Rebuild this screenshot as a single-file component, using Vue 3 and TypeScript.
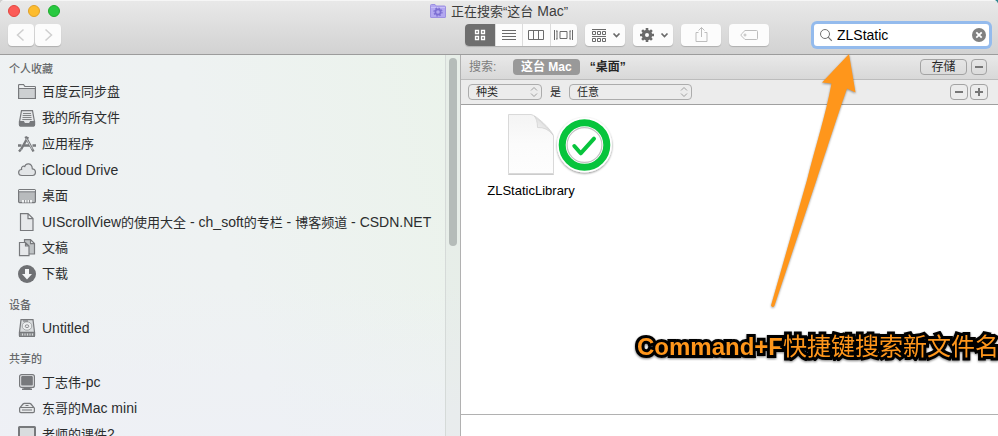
<script setup lang="ts">
import { ref } from 'vue'

interface Place {
  icon: string
  label: string
}
interface Section {
  title: string
  places: Place[]
}
interface Run {
  text: string
  latin: boolean
}

const sections: Section[] = [
  {
    title: '个人收藏',
    places: [
      { icon: 'folder', label: '百度云同步盘' },
      { icon: 'inbox', label: '我的所有文件' },
      { icon: 'apps', label: '应用程序' },
      { icon: 'cloud', label: 'iCloud Drive' },
      { icon: 'desktop', label: '桌面' },
      { icon: 'doc', label: 'UIScrollView的使用大全 - ch_soft的专栏 - 博客频道 - CSDN.NET' },
      { icon: 'docs', label: '文稿' },
      { icon: 'download', label: '下载' },
    ],
  },
  { title: '设备', places: [{ icon: 'disk', label: 'Untitled' }] },
  {
    title: '共享的',
    places: [
      { icon: 'pc', label: '丁志伟-pc' },
      { icon: 'mini', label: '东哥的Mac mini' },
      { icon: 'display', label: '老师的课件2' },
    ],
  },
]

// Latin runs are set one size larger than the Chinese characters beside them.
function runs(label: string): Run[] {
  return (label.match(/[\x20-\x7e]+|[^\x20-\x7e]+/g) ?? []).map((text) => ({
    text,
    latin: /^[\x20-\x7e]/.test(text),
  }))
}

const query = ref('ZLStatic')
const kind = ref('种类')
const value = ref('任意')
const view = ref(0)
const views = ['图标', '列表', '分栏', 'Cover Flow']
</script>

<template>
  <div class="window">
    <header class="chrome">
      <div class="titlebar">
        <div class="lights">
          <button class="light red" aria-label="关闭"></button>
          <button class="light yellow" aria-label="最小化"></button>
          <button class="light green" aria-label="缩放"></button>
        </div>
        <h1 class="title">
          <svg width="16" height="14" viewBox="0 0 16 14" aria-hidden="true">
            <path d="M0.5 13V1.5q0-1 1-1h3.5l1.2 1.5h8.3q1 0 1 1V13q0 .5-.5.5h-14q-.5 0-.5-.5z" fill="#b3a8f0" stroke="#9d90e2" />
            <path d="M1 3.500h14" stroke="#c9c1f8" />
            <circle cx="8" cy="8" r="2.600" fill="none" stroke="#7c6ed2" stroke-width="1.600" />
            <circle cx="8" cy="8" r="4" fill="none" stroke="#7c6ed2" stroke-width="1.200" stroke-dasharray="1.600 1.540" />
          </svg>
          <span class="label"><span
            v-for="(run, i) in runs('正在搜索“这台 Mac”')"
            :key="i"
            :class="{ latin: run.latin }"
          >{{ run.text }}</span></span>
        </h1>
      </div>
      <div class="toolbar">
        <nav class="history">
          <button class="tool nav" aria-label="后退">
            <svg width="26" height="22" viewBox="0 0 26 22"><path d="M15.500 5.500L9.500 11l6 5.500" class="line faint" /></svg>
          </button>
          <button class="tool nav" aria-label="前进">
            <svg width="26" height="22" viewBox="0 0 26 22"><path d="M10.500 5.500l6 5.500-6 5.500" class="line faint" /></svg>
          </button>
        </nav>
        <div class="segments">
          <button
            v-for="(name, i) in views"
            :key="name"
            class="segment"
            :class="{ on: view === i }"
            :aria-label="name"
            @click="view = i"
          >
            <svg v-if="i === 0" width="12" height="12" viewBox="0 0 12 12" class="thin">
              <path d="M1.500 1.500h3v3h-3zM7.500 1.500h3v3h-3zM1.500 7.500h3v3h-3zM7.500 7.500h3v3h-3z" stroke-width="1.300" />
            </svg>
            <svg v-else-if="i === 1" width="14" height="12" viewBox="0 0 14 12" class="thin">
              <path d="M0 1.500h14M0 4.500h14M0 7.500h14M0 10.500h14" />
            </svg>
            <svg v-else-if="i === 2" width="16" height="12" viewBox="0 0 16 12" class="thin">
              <path d="M.5 1.500h15v9H.5zM5.500 1.500v9M10.500 1.500v9" />
            </svg>
            <svg v-else width="19" height="12" viewBox="0 0 19 12" class="thin">
              <path d="M.5 1v10M3 2v8M16 2v8M18.500 1v10M2 2h1.500M2 10h1.500M17 2h-1.500M17 10h-1.500M6 2.500h7v7H6z" />
            </svg>
          </button>
        </div>
        <button class="tool" aria-label="排列方式">
          <svg width="40" height="22" viewBox="0 0 40 22" class="thin">
            <path d="M7 5.500h14M7 12.500h14M7.500 7.500h3v3h-3zM12.500 7.500h3v3h-3zM17.500 7.500h3v3h-3zM7.500 14.500h3v3h-3zM12.500 14.500h3v3h-3zM17.500 14.500h3v3h-3z" />
            <path d="M28.500 9.500l3 3 3-3" stroke-width="1.700" />
          </svg>
        </button>
        <button class="tool" aria-label="操作">
          <svg width="40" height="22" viewBox="0 0 40 22" class="thin">
            <circle cx="14" cy="11" r="3.600" stroke-width="3.200" />
            <g stroke-width="2.600">
              <path d="M14 4v3M14 15v3M7 11h3M18 11h3M9.100 6.100l2 2M16.900 13.900l2 2M9.100 15.900l2-2M16.900 8.100l2-2" />
            </g>
            <path d="M28.500 9.500l3 3 3-3" stroke-width="1.700" />
          </svg>
        </button>
        <button class="tool" aria-label="共享">
          <svg width="40" height="22" viewBox="0 0 40 22" class="thin pale">
            <path d="M17.500 8.500h-2.500v9h11v-9h-2.500M20.500 13V3.500M17.500 6.500l3-3 3 3" />
          </svg>
        </button>
        <button class="tool" aria-label="编辑标记">
          <svg width="40" height="22" viewBox="0 0 40 22" class="thin pale">
            <path d="M16 6.500h11.500q1 0 1 1v7q0 1-1 1H16L12.300 11.800q-.6-.8 0-1.600z" />
            <circle cx="16" cy="11" r="1" />
          </svg>
        </button>
        <label class="search">
          <svg width="14" height="14" viewBox="0 0 14 14" aria-hidden="true">
            <circle cx="6" cy="6" r="4.500" fill="none" stroke="#737373" />
            <path d="M9.200 9.200l3.600 3.600" stroke="#737373" stroke-width="1.200" />
          </svg>
          <input v-model="query" type="text" aria-label="搜索" />
          <button class="clear" aria-label="清除" @click="query = ''">
            <svg width="14" height="14" viewBox="0 0 14 14">
              <circle cx="7" cy="7" r="7" fill="#808080" />
              <path d="M4.300 4.300l5.400 5.400M9.700 4.300l-5.400 5.400" stroke="#fff" stroke-width="1.800" />
            </svg>
          </button>
        </label>
      </div>
    </header>

    <div class="body">
      <aside class="sidebar">
        <div class="places">
          <section v-for="section in sections" :key="section.title">
            <h2>{{ section.title }}</h2>
            <ul>
              <li v-for="place in section.places" :key="place.label">
                <a href="#">
                  <svg width="18" height="18" viewBox="0 0 18 18" class="glyph" aria-hidden="true">
                    <g v-if="place.icon === 'folder'">
                      <path d="M.6 15.500V2.200q0-.7.7-.7h4.200l1.500 2h9.700q.7 0 .7.700v11.300z" fill="#cdd0d2" />
                      <path d="M.6 5.500h16.800" />
                      <path d="M1.200 3.500V2.500h4l1 1.600h10.600v.8H1.200z" fill="#eff1f2" stroke="none" />
                    </g>
                    <g v-else-if="place.icon === 'inbox'">
                      <path d="M3.500 1.700h11l2 11v3.300q0 .8-.8.8H2.300q-.8 0-.8-.8v-3.300z" fill="#e4e6e8" />
                      <path d="M1.500 12.500h4l1 2h5l1-2h4V16q0 .8-.8.8H2.300q-.8 0-.8-.8z" fill="#77797c" />
                      <path d="M5 4.500h8M4.700 6.500h8.600M4.500 8.500h9M4.300 10.500h9.400" stroke-width=".9" />
                    </g>
                    <g v-else-if="place.icon === 'apps'">
                      <path d="M7.500 1.500l8 15M10 2L3 14.500" stroke-width="2.400" />
                      <path d="M0 10.500h3.500M5.500 10.500h7M14.500 10.500h3.500M1 16.500l1.800-2" stroke-width="2.400" />
                      <path d="M8.300 3.600l6 10.800" stroke="#dfe2e4" stroke-width=".8" />
                    </g>
                    <path
                      v-else-if="place.icon === 'cloud'"
                      d="M4 14.500C-.5 14.300-.3 8.600 3.600 8.500 3 5.600 5.200 4.700 6.700 5.600 8 1.700 14 1.500 14.300 7.800c4.300.4 4 6.500.3 6.700z"
                      fill="#e2e5e7"
                    />
                    <g v-else-if="place.icon === 'desktop'">
                      <rect x=".6" y="2.600" width="16.800" height="13" rx="1" fill="#b8bbbd" />
                      <path d="M1 3.500h16" stroke="#eceeef" />
                      <path d="M.6 4.900h16.800" stroke-width=".8" />
                      <path d="M4 15.500v-2.500h10v2.500z" fill="#f1f3f4" stroke="none" />
                      <path d="M6.500 13v3M9 13v3M11.500 13v3" stroke-width=".8" />
                    </g>
                    <path v-else-if="place.icon === 'doc'" d="M2.500.6h7.500l5 5v11.900H2.500zM10 .6v5h5" fill="#e6e8ea" />
                    <g v-else-if="place.icon === 'docs'">
                      <path d="M6.500.6h6l4 4v10.400H6.500zM12.500.6v4h4" fill="#bfc3c5" />
                      <path d="M1.500 3.500h6l3.500 3.500v9.700H1.500zM7.500 3.500V7H11" fill="#e6e8ea" />
                    </g>
                    <g v-else-if="place.icon === 'download'" stroke="none">
                      <circle cx="9" cy="9" r="9" fill="#6f7174" />
                      <path d="M7 4h4v5h3l-5 5.500L4 9h3z" fill="#f4f6f7" />
                    </g>
                    <g v-else-if="place.icon === 'disk'">
                      <path d="M3 .6h12l1.500 12.400v3.700q0 .8-.8.8H2.300q-.8 0-.8-.8V13z" fill="#d9dcde" />
                      <path d="M1.500 13.300h15v3.400q0 .8-.8.8H2.300q-.8 0-.8-.8z" fill="#8b8e90" />
                      <ellipse cx="9" cy="7" rx="4.800" ry="4.200" fill="#eceeef" stroke="#96999b" stroke-width=".8" />
                      <ellipse cx="9" cy="7.200" rx="1.800" ry="1.400" stroke-width=".8" />
                      <path d="M5 2h5" />
                      <path d="M4 15.500h1M6.500 15.500h1M9 15.500h1M11.500 15.500h1M14 15.500h1" stroke="#d9dcde" stroke-width="2" />
                    </g>
                    <g v-else-if="place.icon === 'pc'">
                      <rect x="1.600" y="1.600" width="14.800" height="12.800" rx="2" fill="#e6e8ea" />
                      <rect x="3.800" y="3.600" width="10.400" height="8.400" rx=".6" fill="#77797c" />
                      <path d="M5.500 14.500h7v1h1.500v1.500H4v-1.500h1.500z" fill="#77797c" stroke="none" />
                    </g>
                    <g v-else-if="place.icon === 'mini'">
                      <path d="M1.600 9.200L5 5q.5-.6 1.300-.6h5.400q.8 0 1.300.6l3.400 4.200v3q0 1.400-1.400 1.400H3q-1.400 0-1.400-1.400z" fill="#e6e8ea" />
                      <path d="M2 8.500h14M4 11h10M7.500 6.500h3" />
                    </g>
                    <g v-else>
                      <rect x="1" y="2" width="16" height="12" rx=".5" fill="#d9dcde" stroke-width="2" />
                      <path d="M6 16.500h6" stroke-width="2" />
                    </g>
                  </svg>
                  <span class="label"><span
                    v-for="(run, i) in runs(place.label)"
                    :key="i"
                    :class="{ latin: run.latin }"
                  >{{ run.text }}</span></span>
                </a>
              </li>
            </ul>
          </section>
        </div>
        <div class="track"><div class="thumb"></div></div>
      </aside>

      <main class="pane">
        <div class="scope">
          <span class="caption">搜索:</span>
          <button class="pill">这台 Mac</button>
          <button class="plain">“桌面”</button>
          <div class="end">
            <button class="outline save">存储</button>
            <button class="outline mini" aria-label="关闭搜索">
              <svg width="10" height="10" viewBox="0 0 10 10"><path d="M1 5h8" class="sign" /></svg>
            </button>
          </div>
        </div>
        <div class="filter">
          <span class="picker kind">
            <select v-model="kind" aria-label="属性">
              <option>种类</option>
            </select>
            <svg width="8" height="12" viewBox="0 0 8 12" aria-hidden="true"><path d="M1 4.500l3-3 3 3M1 7.500l3 3 3-3" /></svg>
          </span>
          <span>是</span>
          <span class="picker value">
            <select v-model="value" aria-label="值">
              <option>任意</option>
            </select>
            <svg width="8" height="12" viewBox="0 0 8 12" aria-hidden="true"><path d="M1 4.500l3-3 3 3M1 7.500l3 3 3-3" /></svg>
          </span>
          <div class="end pair">
            <button class="outline square" aria-label="移除条件">
              <svg width="10" height="10" viewBox="0 0 10 10"><path d="M1 5h8" class="sign" /></svg>
            </button>
            <button class="outline square" aria-label="添加条件">
              <svg width="10" height="10" viewBox="0 0 10 10"><path d="M1 5h8M5 1v8" class="sign" /></svg>
            </button>
          </div>
        </div>
        <div class="files">
          <figure class="file">
            <svg width="46" height="62" viewBox="0 0 46 62" class="art" aria-hidden="true">
              <defs>
                <linearGradient id="paper" x1="0" y1="0" x2="0" y2="1">
                  <stop offset="0" stop-color="#f4f4f4" />
                  <stop offset="0.500" stop-color="#fbfbfb" />
                  <stop offset="1" stop-color="#fdfdfd" />
                </linearGradient>
                <linearGradient id="fold" x1="0" y1="1" x2="1" y2="0">
                  <stop offset="0" stop-color="#ffffff" />
                  <stop offset="0.500" stop-color="#e4e4e4" />
                </linearGradient>
                <filter id="soft" x="-20%" y="-20%" width="140%" height="140%">
                  <feDropShadow dx="0" dy="1" stdDeviation="1" flood-opacity="0.450" />
                </filter>
                <filter id="sheet" x="-10%" y="-10%" width="120%" height="120%">
                  <feDropShadow dx="0" dy="1" stdDeviation="0.600" flood-opacity="0.200" />
                </filter>
              </defs>
              <path d="M.5 1.500H23C28 2 44 17 45.500 23V60.500H.5z" fill="url(#paper)" stroke="#d9d9d9" filter="url(#sheet)" />
              <path d="M26 3Q29.500 6 29.500 14.500Q39 14 45 22Q41 15 26 3z" fill="url(#fold)" stroke="#d2d2d2" stroke-width=".8" />
              <circle cx="76.500" cy="32" r="27.500" fill="#fff" filter="url(#soft)" />
              <circle cx="76.500" cy="32" r="22.300" fill="none" stroke="#07c43c" stroke-width="7" />
              <circle cx="76.500" cy="32" r="17.400" fill="#fff" stroke="#c2c2c2" stroke-width="1.200" />
              <path d="M66.300 33l6.400 7.300L86 25.700" fill="none" stroke="#07c43c" stroke-width="4" stroke-linecap="round" stroke-linejoin="round" />
            </svg>
            <figcaption>ZLStaticLibrary</figcaption>
          </figure>
        </div>
        <footer class="pathbar"></footer>
      </main>
    </div>

    <svg class="arrow" width="86" height="256" viewBox="0 0 86 256" aria-hidden="true">
      <path d="M79 0L85.500 38.500 77 34.500C66 66 54 104 46.500 126L4.500 251.500Q3 254.500 1 251.500L37 126C45 94 56 60 61.500 29.500L52 28.500z" fill="#ff961b" />
    </svg>
    <p class="note"><strong>Command+F</strong>快捷键搜索新文件名</p>
  </div>
</template>

<style>
body {
  background: linear-gradient(90deg, #cfcfcf 50%, #2f8790 50%);
}
</style>

<style scoped>
.window {
  position: relative;
  display: flex;
  flex-direction: column;
  height: 100vh;
  overflow: hidden;
  border-radius: 5px 5px 0 0;
  background: #fff;
  color: #262626;
  font: 13px/20px "Liberation Sans", "Noto Sans CJK SC", sans-serif;
}
.window * {
  box-sizing: border-box;
}
button,
input,
select {
  margin: 0;
  padding: 0;
  border: 0;
  background: none;
  color: inherit;
  font: inherit;
}
svg {
  display: block;
  flex: none;
}
.chrome {
  flex: none;
  border-bottom: 1px solid #9c9c9c;
  background: linear-gradient(#e9e9e9, #d2d2d2);
  box-shadow: inset 0 1px #f6f6f6;
}
.titlebar {
  display: grid;
  grid-template-columns: 1fr auto 1fr;
  align-items: center;
  height: 22px;
  padding: 0 8px;
}
.lights {
  display: flex;
  gap: 8px;
}
.light {
  width: 12px;
  height: 12px;
  border: 1px solid #e2463f;
  border-radius: 50%;
  background: #fc5b57;
}
.light.yellow {
  border-color: #e0a028;
  background: #fdbc2e;
}
.light.green {
  border-color: #1eab2c;
  background: #28c940;
}
.title {
  display: flex;
  align-items: center;
  gap: 5px;
  margin: 0;
  color: #3d3d3d;
  font-size: 13px;
  font-weight: 400;
}
.toolbar {
  display: flex;
  gap: 8px;
  padding: 2px 8px 8px;
}
.history {
  display: flex;
  flex: 0 0 449px;
  gap: 1px;
}
.tool,
.segments {
  border-radius: 4px;
  background: #fcfcfc;
  box-shadow: 0 1px 1px rgba(0, 0, 0, 0.18);
}
.tool {
  width: 40px;
  height: 22px;
  flex: none;
}
.tool.nav {
  width: 26px;
}
.line {
  fill: none;
  stroke: #737373;
  stroke-width: 1.5;
}
.line.faint {
  stroke: #cfcfcf;
}
.segments {
  display: flex;
  width: 112px;
  height: 22px;
  overflow: hidden;
}
.segment {
  display: flex;
  align-items: center;
  justify-content: center;
  flex: 1;
  border-left: 1px solid #dcdcdc;
}
.segment:first-child {
  flex: 0 0 30px;
  border-left: 0;
}
.segment.on {
  background: #6e6e6e;
}
.thin {
  fill: none;
  stroke: #6a6a6a;
}
.thin.pale {
  stroke: #bdbdbd;
}
.on .thin {
  stroke: #fff;
}
.search {
  display: flex;
  align-items: center;
  gap: 4px;
  width: 175px;
  height: 22px;
  margin: 0 1px 0 auto;
  padding: 0 3px 0 5px;
  border-radius: 3px;
  background: #fff;
  box-shadow: 0 0 0 3px #94bbed;
}
.search input {
  flex: 1;
  min-width: 0;
  outline: 0;
  color: #000;
  font-size: 14px;
}
.body {
  display: flex;
  flex: 1;
  min-height: 0;
}
.sidebar {
  display: flex;
  flex: 0 0 461px;
  min-height: 0;
  border-right: 1px solid #b1b1b1;
  background:
    linear-gradient(180deg, transparent 60%, rgba(238, 240, 246, 0.8)),
    linear-gradient(75deg, #eef1f3, #eef2f2 50%, #ebf3eb);
}
.places {
  flex: 1;
  min-width: 0;
  overflow: hidden;
}
.places h2 {
  margin: 0;
  padding: 8px 9px 0;
  color: #66696b;
  font-size: 11px;
  font-weight: 500;
  line-height: 20px;
}
.places section:first-child h2 {
  padding-top: 4px;
}
.places ul {
  margin: 0;
  padding: 0;
  list-style: none;
}
.places a {
  display: flex;
  align-items: center;
  gap: 6px;
  height: 26px;
  padding-left: 18px;
  color: #2b2d2e;
  text-decoration: none;
  white-space: nowrap;
}
.label > span {
  white-space: pre;
}
.latin {
  font-size: 14px;
}
.glyph {
  fill: none;
  stroke: #77797c;
  stroke-width: 1.2;
}
.track {
  flex: 0 0 15px;
  padding: 3px 3px 0;
  border-left: 1px solid #d5dad8;
  background: rgba(225, 230, 228, 0.4);
}
.thumb {
  width: 8px;
  height: 188px;
  border-radius: 4px;
  background: #b5bcb9;
}
.pane {
  display: flex;
  flex: 1;
  flex-direction: column;
  min-width: 0;
  background: #fff;
}
.scope,
.filter {
  display: flex;
  align-items: center;
  flex: none;
  height: 25px;
  font-size: 11px;
  line-height: 16px;
}
.scope {
  padding: 0 11px 0 8px;
  border-bottom: 1px solid #bcbcbc;
  background: linear-gradient(#e9e9e9, #d8d8d8);
}
.caption {
  width: 44px;
  color: #7d7d7d;
  font-size: 12px;
}
.pill {
  height: 16px;
  padding: 0 8px;
  border-radius: 4px;
  background: #999;
  color: #fff;
  font-size: 12px;
  font-weight: 700;
}
.plain {
  margin-left: 10px;
  font-size: 12px;
  font-weight: 700;
}
.end {
  display: flex;
  gap: 4px;
  margin-left: auto;
}
.end.pair {
  gap: 2px;
}
.outline {
  display: flex;
  align-items: center;
  justify-content: center;
  height: 16px;
  border: 1px solid #a3a3a3;
  border-radius: 4px;
}
.save {
  width: 47px;
  font-size: 12px;
}
.outline.mini {
  width: 16px;
}
.outline.square {
  width: 18px;
}
.sign {
  stroke: #777;
  stroke-width: 2;
}
.filter {
  gap: 8px;
  padding: 0 10px 0 7px;
  border-bottom: 1px solid #a0a0a0;
  background: #ececec;
}
.picker {
  position: relative;
  display: flex;
}
.picker select {
  width: 100%;
  height: 16px;
  padding: 0 16px 0 7px;
  border: 1px solid #acacac;
  border-radius: 4px;
  appearance: none;
  line-height: 14px;
}
.picker svg {
  position: absolute;
  top: 2px;
  right: 4px;
  fill: none;
  stroke: #a0a0a0;
  pointer-events: none;
}
.kind {
  width: 74px;
}
.value {
  width: 123px;
}
.files {
  flex: 1;
  min-height: 0;
  padding: 8px 20px;
}
.file {
  display: flex;
  flex-direction: column;
  align-items: center;
  gap: 6px;
  width: 100px;
  margin: 0;
  color: #000;
}
.art {
  overflow: visible;
}
.pathbar {
  flex: none;
  height: 22px;
  border-top: 1px solid #b1b1b1;
}
.arrow {
  position: absolute;
  top: 54px;
  right: 142px;
  overflow: visible;
  filter: drop-shadow(0 1px 1px rgba(0, 0, 0, 0.4));
  pointer-events: none;
}
.note {
  position: absolute;
  top: 330px;
  left: 637px;
  margin: 0;
  color: #ff961b;
  font-size: 24px;
  font-weight: 400;
  line-height: 34px;
  white-space: nowrap;
  -webkit-text-stroke: 6px #000;
  paint-order: stroke fill;
  filter: drop-shadow(0 1px 1px rgba(0, 0, 0, 0.5));
}
.note strong {
  font-weight: 700;
}
</style>
